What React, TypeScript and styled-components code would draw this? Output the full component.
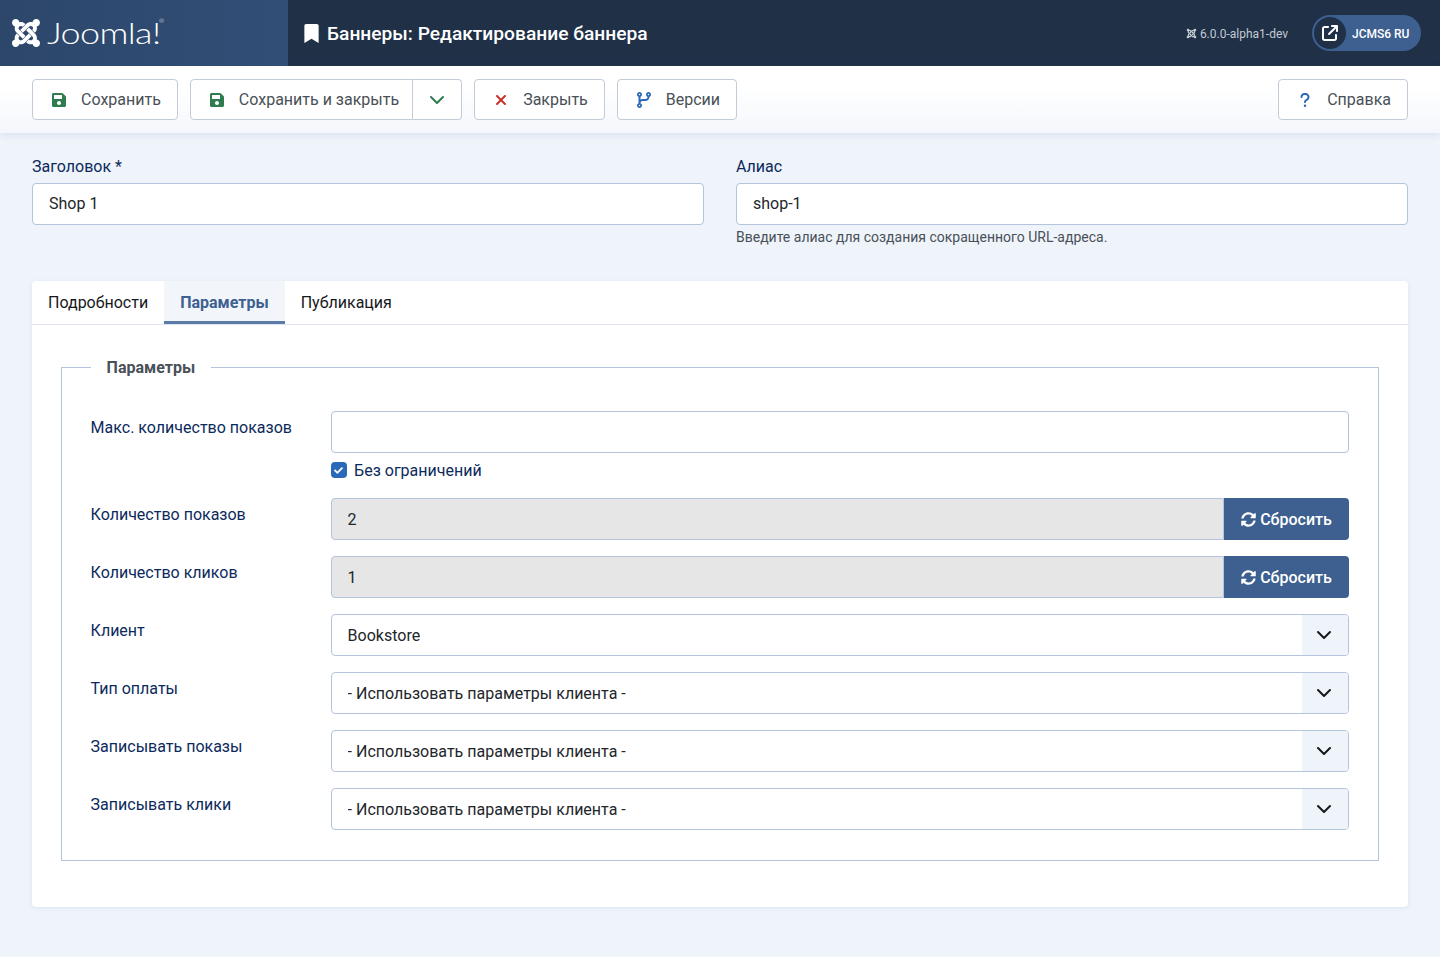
import React from 'react';
import styled, { createGlobalStyle } from 'styled-components';
import { FaCheck, FaJoomla, FaSave, FaSyncAlt, FaBookmark } from 'react-icons/fa';
import {
	FaArrowUpRightFromSquare,
	FaCodeBranch,
	FaQuestion,
	FaXmark,
} from 'react-icons/fa6';
import { ChevronDown } from 'lucide-react';

const GlobalStyle = createGlobalStyle`
	* {
		box-sizing: border-box;
	}
	body {
		margin: 0;
		background-color: #eff4fb;
		font-family: Roboto, 'Liberation Sans', Arial, sans-serif;
		font-size: 16px;
		line-height: 24px;
		color: #22262a;
	}
`;

const Page = styled.div`
	min-height: 957px;
`;

const Header = styled.header`
	display: flex;
	height: 66px;
	background-color: #1f3047;
	color: #fff;
`;

const LogoBox = styled.div`
	display: flex;
	align-items: center;
	gap: 5px;
	width: 288px;
	padding-left: 10px;
	background: linear-gradient(90deg, #2d476b, #314e76);
`;

const LogoMark = styled(FaJoomla)`
	width: 32px;
	height: 32px;
`;

const LogoWord = styled.span`
	position: relative;
	font-family: Lato, sans-serif;
	font-weight: 300;
	font-size: 29px;
	line-height: 32px;
	letter-spacing: -0.5px;
	transform: scaleX(1.24);
	transform-origin: left center;
`;

const Registered = styled.sup`
	position: absolute;
	top: 2px;
	right: -3px;
	font-size: 5px;
	line-height: 5px;
	letter-spacing: 0;
`;

const PageTitle = styled.h1`
	display: flex;
	align-items: center;
	gap: 8px;
	flex: 1;
	margin: 0;
	padding-left: 16px;
	font-size: 19.2px;
	font-weight: 500;
`;

const TitleText = styled.span`
	padding-top: 1px;
`;

const TitleIcon = styled(FaBookmark)`
	width: 15px;
	height: 19px;
`;

const Version = styled.div`
	display: flex;
	align-items: center;
	gap: 3px;
	margin-right: 24px;
	padding-top: 1px;
	font-size: 12px;
	color: #c3cad3;
`;

const SiteLink = styled.a`
	display: flex;
	align-items: center;
	align-self: center;
	gap: 6px;
	width: 109px;
	height: 36px;
	margin-right: 19px;
	padding-left: 2px;
	border-radius: 18px;
	background-color: #3d6090;
	font-size: 12px;
	font-weight: 500;
`;

const SiteName = styled.span`
	padding-top: 1px;
`;

const SiteIcon = styled.span`
	display: flex;
	align-items: center;
	justify-content: center;
	width: 32px;
	height: 32px;
	border-radius: 50%;
	background-color: #1f3047;
	font-size: 16px;
`;

const Toolbar = styled.div`
	display: flex;
	align-items: center;
	gap: 12px;
	height: 67px;
	padding: 0 32px;
	background: linear-gradient(180deg, #fff 30%, #f4f7fc);
	box-shadow: 0 2px 8px rgba(60, 90, 140, 0.12);
`;

const ToolButton = styled.button<{ $pushRight?: boolean }>`
	display: flex;
	align-items: center;
	gap: 14px;
	height: 41px;
	padding: 0 16px 0 18px;
	margin-left: ${(p) => (p.$pushRight ? 'auto' : '0')};
	border: 1px solid #c3cbd8;
	border-radius: 4px;
	background-color: #fff;
	color: #495057;
	font-family: inherit;
	font-size: 16px;
`;

const ToolIcon = styled.span<{ $color: string }>`
	display: flex;
	justify-content: center;
	width: 16px;
	font-size: 16px;
	color: ${(p) => p.$color};
`;

const ButtonGroup = styled.div`
	display: flex;
`;

const GroupMain = styled(ToolButton)`
	padding-right: 13px;
	border-radius: 4px 0 0 4px;
`;

const GroupToggle = styled(ToolButton)`
	width: 49px;
	padding: 0;
	justify-content: center;
	border-left: none;
	border-radius: 0 4px 4px 0;
	color: #2f7d4f;
`;

const Main = styled.main`
	padding: 21px 32px 50px;
`;

const TitleRow = styled.div`
	display: grid;
	grid-template-columns: 1fr 1fr;
	gap: 32px;
	height: 127px;
`;

const FieldLabel = styled.label`
	display: block;
	margin-bottom: 4px;
	padding-top: 1px;
	color: #0c2a5c;
`;

const TextInput = styled.input`
	display: block;
	width: 100%;
	height: 42px;
	padding: 0 16px;
	border: 1px solid #b4c4dc;
	border-radius: 4px;
	background-color: ${(p) => (p.readOnly ? '#e6e6e6' : '#fff')};
	color: #22262a;
	font-family: inherit;
	font-size: 16px;
	outline: none;
`;

const TitleInput = styled(TextInput)`
	padding-bottom: 2px;
`;

const GroupInput = styled(TextInput)`
	border-radius: 4px 0 0 4px;
`;

const Hint = styled.div`
	margin-top: 2px;
	font-size: 14px;
	line-height: 21px;
	color: #495057;
`;

const Card = styled.section`
	border-radius: 4px;
	background-color: #fff;
	box-shadow: 0 1px 4px rgba(60, 90, 140, 0.1);
`;

const TabBar = styled.div`
	display: flex;
	height: 44px;
	border-bottom: 1px solid #dde4f0;
`;

const Tab = styled.div<{ $active?: boolean }>`
	height: 43px;
	padding: 10px 16px 0;
	border-bottom: 3px solid ${(p) => (p.$active ? '#5b7ca8' : 'transparent')};
	background-color: ${(p) => (p.$active ? '#f2f5f9' : 'transparent')};
	color: ${(p) => (p.$active ? '#3d6090' : '#16191c')};
	font-weight: ${(p) => (p.$active ? 700 : 400)};
`;

const TabPanel = styled.div`
	padding: 30px 29px 46px;
`;

const Fieldset = styled.fieldset`
	margin: 0;
	padding: 32px 29px 30px 28.6px;
	border: 1px solid #b4c4dc;
`;

const Legend = styled.legend`
	padding: 2px 16px 0;
	color: #495057;
	font-weight: 700;
	line-height: 22px;
`;

const Rows = styled.div`
	display: flex;
	flex-direction: column;
	gap: 16px;
`;

const Row = styled.div`
	display: grid;
	grid-template-columns: 240px 1fr;
`;

const RowLabel = styled.label`
	padding-top: 5px;
	color: #0c2a5c;
`;

const CheckRow = styled.label`
	display: flex;
	align-items: center;
	gap: 7.5px;
	height: 24px;
	margin-top: 5px;
	color: #0c2a5c;
`;

const CheckText = styled.span`
	padding-top: 2px;
	line-height: 22px;
`;

const CheckBox = styled.span`
	display: flex;
	align-items: center;
	justify-content: center;
	width: 16px;
	height: 16px;
	border-radius: 4px;
	background-color: #2a69b8;
	color: #fff;
	font-size: 9px;
`;

const InputGroup = styled.div`
	display: flex;
`;

const ResetButton = styled.button`
	display: flex;
	align-items: center;
	justify-content: center;
	gap: 4px;
	flex: none;
	width: 125px;
	height: 42px;
	padding: 0;
	border: none;
	border-radius: 0 4px 4px 0;
	background-color: #3d6090;
	color: #fff;
	font-family: inherit;
	font-size: 16px;
	font-weight: 500;
`;

const SelectBox = styled.div`
	position: relative;
`;

const Select = styled.select`
	display: block;
	width: 100%;
	height: 42px;
	padding: 0 16px;
	border: 1px solid #b4c4dc;
	border-radius: 4px;
	background-color: #fff;
	color: #22262a;
	font-family: inherit;
	font-size: 16px;
	appearance: none;
	outline: none;
`;

const SelectArrow = styled.span`
	position: absolute;
	top: 1px;
	right: 1px;
	bottom: 1px;
	display: flex;
	align-items: center;
	justify-content: center;
	width: 46px;
	padding-right: 3px;
	border-radius: 0 3px 3px 0;
	background-color: #eff4fb;
	color: #16191c;
	pointer-events: none;
`;

const INHERIT = '- Использовать параметры клиента -';

const selects = [
	{ label: 'Клиент', value: 'Bookstore' },
	{ label: 'Тип оплаты', value: INHERIT },
	{ label: 'Записывать показы', value: INHERIT },
	{ label: 'Записывать клики', value: INHERIT },
];

const counters = [
	{ label: 'Количество показов', value: '2' },
	{ label: 'Количество кликов', value: '1' },
];

const App = () => (
	<Page>
		<GlobalStyle />
		<Header>
			<LogoBox>
				<LogoMark />
				<LogoWord>
					Joomla!<Registered>®</Registered>
				</LogoWord>
			</LogoBox>
			<PageTitle>
				<TitleIcon />
				<TitleText>Баннеры: Редактирование баннера</TitleText>
			</PageTitle>
			<Version>
				<FaJoomla size={11} />
				6.0.0-alpha1-dev
			</Version>
			<SiteLink>
				<SiteIcon>
					<FaArrowUpRightFromSquare />
				</SiteIcon>
				<SiteName>JCMS6 RU</SiteName>
			</SiteLink>
		</Header>

		<Toolbar>
			<ToolButton>
				<ToolIcon $color="#2f7d4f">
					<FaSave />
				</ToolIcon>
				Сохранить
			</ToolButton>
			<ButtonGroup>
				<GroupMain>
					<ToolIcon $color="#2f7d4f">
						<FaSave />
					</ToolIcon>
					Сохранить и закрыть
				</GroupMain>
				<GroupToggle>
					<ChevronDown size={24} strokeWidth={2} />
				</GroupToggle>
			</ButtonGroup>
			<ToolButton>
				<ToolIcon $color="#c9302c">
					<FaXmark />
				</ToolIcon>
				Закрыть
			</ToolButton>
			<ToolButton>
				<ToolIcon $color="#2a69b8">
					<FaCodeBranch />
				</ToolIcon>
				Версии
			</ToolButton>
			<ToolButton $pushRight>
				<ToolIcon $color="#2a69b8">
					<FaQuestion />
				</ToolIcon>
				Справка
			</ToolButton>
		</Toolbar>

		<Main>
			<TitleRow>
				<div>
					<FieldLabel>Заголовок *</FieldLabel>
					<TitleInput defaultValue="Shop 1" />
				</div>
				<div>
					<FieldLabel>Алиас</FieldLabel>
					<TitleInput defaultValue="shop-1" />
					<Hint>Введите алиас для создания сокращенного URL-адреса.</Hint>
				</div>
			</TitleRow>

			<Card>
				<TabBar>
					<Tab>Подробности</Tab>
					<Tab $active>Параметры</Tab>
					<Tab>Публикация</Tab>
				</TabBar>
				<TabPanel>
					<Fieldset>
						<Legend>Параметры</Legend>
						<Rows>
							<Row>
								<RowLabel>Макс. количество показов</RowLabel>
								<div>
									<TextInput />
									<CheckRow>
										<CheckBox>
											<FaCheck />
										</CheckBox>
										<CheckText>Без ограничений</CheckText>
									</CheckRow>
								</div>
							</Row>
							{counters.map((counter) => (
								<Row key={counter.label}>
									<RowLabel>{counter.label}</RowLabel>
									<InputGroup>
										<GroupInput readOnly value={counter.value} />
										<ResetButton>
											<FaSyncAlt size={15} />
											Сбросить
										</ResetButton>
									</InputGroup>
								</Row>
							))}
							{selects.map((item) => (
								<Row key={item.label}>
									<RowLabel>{item.label}</RowLabel>
									<SelectBox>
										<Select defaultValue={item.value}>
											<option>{item.value}</option>
										</Select>
										<SelectArrow>
											<ChevronDown size={24} strokeWidth={2} />
										</SelectArrow>
									</SelectBox>
								</Row>
							))}
						</Rows>
					</Fieldset>
				</TabPanel>
			</Card>
		</Main>
	</Page>
);

export default App;
